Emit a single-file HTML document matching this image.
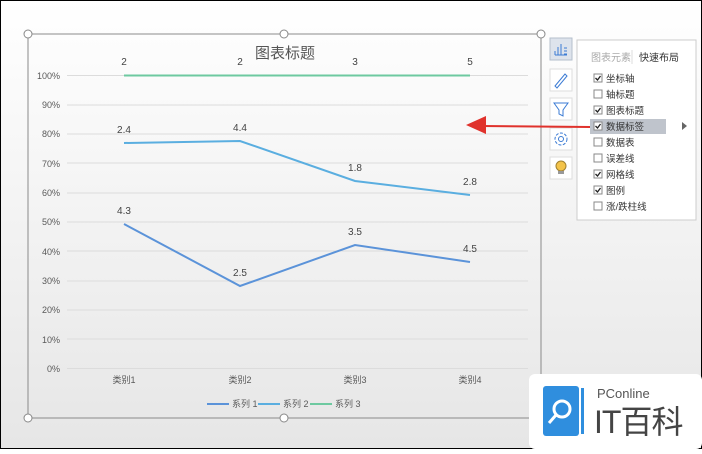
<!DOCTYPE html>
<html><head><meta charset="utf-8"><style>
body{margin:0;width:702px;height:449px;overflow:hidden;font-family:"Liberation Sans","Noto Sans CJK SC",sans-serif;}
</style></head><body>
<svg width="702" height="449" xmlns="http://www.w3.org/2000/svg" font-family="Liberation Sans, Noto Sans CJK SC, sans-serif">
<defs><linearGradient id="bg" x1="0" y1="0" x2="0" y2="1"><stop offset="0" stop-color="#ffffff"/><stop offset="1" stop-color="#e6e6e6"/></linearGradient></defs>
<rect x="0" y="0" width="702" height="449" fill="url(#bg)"/>
<rect x="0.5" y="0.5" width="701" height="448" fill="none" stroke="#000"/>
<rect x="28" y="34" width="513" height="384" fill="none" stroke="#8a8a8a"/>
<g fill="#fff" stroke="#888">
<circle cx="28" cy="34" r="4"/><circle cx="284" cy="34" r="4"/><circle cx="541" cy="34" r="4"/>
<circle cx="28" cy="418" r="4"/><circle cx="284" cy="418" r="4"/></g>
<text x="285" y="58" font-size="15" fill="#555" text-anchor="middle">图表标题</text>
<g stroke="#dcdcdc" stroke-width="1">
<line x1="67" y1="75.5" x2="528" y2="75.5"/><line x1="67" y1="105" x2="528" y2="105"/><line x1="67" y1="134" x2="528" y2="134"/><line x1="67" y1="163" x2="528" y2="163"/><line x1="67" y1="193" x2="528" y2="193"/><line x1="67" y1="222" x2="528" y2="222"/><line x1="67" y1="251" x2="528" y2="251"/><line x1="67" y1="281" x2="528" y2="281"/><line x1="67" y1="310" x2="528" y2="310"/><line x1="67" y1="339" x2="528" y2="339"/><line x1="67" y1="368.5" x2="528" y2="368.5"/></g>
<g font-size="9" fill="#595959" text-anchor="end">
<text x="60" y="79">100%</text><text x="60" y="108">90%</text><text x="60" y="137">80%</text><text x="60" y="167">70%</text><text x="60" y="196">60%</text><text x="60" y="225">50%</text><text x="60" y="255">40%</text><text x="60" y="284">30%</text><text x="60" y="313">20%</text><text x="60" y="343">10%</text><text x="60" y="372">0%</text></g>
<g font-size="9" fill="#595959" text-anchor="middle">
<text x="124" y="383">类别1</text><text x="240" y="383">类别2</text><text x="355" y="383">类别3</text><text x="470" y="383">类别4</text></g>
<polyline points="124,75.5 470,75.5" stroke="#6dc9a0" stroke-width="2" fill="none"/>
<polyline points="124,143 240,141 355,181 470,195" stroke="#5aaee0" stroke-width="2" fill="none"/>
<polyline points="124,224 240,286 355,245 470,262" stroke="#5b93d9" stroke-width="2" fill="none"/>
<g font-size="10" fill="#444" text-anchor="middle">
<text x="124" y="65">2</text><text x="240" y="65">2</text><text x="355" y="65">3</text><text x="470" y="65">5</text>
<text x="124" y="133">2.4</text><text x="240" y="131">4.4</text><text x="355" y="171">1.8</text><text x="470" y="185">2.8</text>
<text x="124" y="214">4.3</text><text x="240" y="276">2.5</text><text x="355" y="235">3.5</text><text x="470" y="252">4.5</text></g>
<g font-size="9" fill="#595959">
<line x1="207" y1="404" x2="229" y2="404" stroke="#5b93d9" stroke-width="2"/><text x="232" y="407">系列 1</text>
<line x1="258" y1="404" x2="280" y2="404" stroke="#5aaee0" stroke-width="2"/><text x="283" y="407">系列 2</text>
<line x1="310" y1="404" x2="332" y2="404" stroke="#6dc9a0" stroke-width="2"/><text x="335" y="407">系列 3</text></g>
<!-- side buttons -->
<rect x="550" y="38" width="22" height="22" fill="#dde3ec" stroke="#b5bfcc"/>
<g stroke="#3b7bd4" fill="none"><path d="M555 55v-4M558 55v-8M561 55v-11M555 55h12M564 48h3M564 51h3M564 54h3"/></g>
<rect x="550" y="69" width="22" height="22" fill="#fff" stroke="#ddd"/>
<path d="M555 86l10-12 2 2-10 12z" fill="none" stroke="#3b7bd4"/>
<rect x="550" y="98" width="22" height="22" fill="#fff" stroke="#ddd"/>
<path d="M554 103h14l-5 7v6l-4-2v-4z" fill="none" stroke="#3b7bd4"/>
<rect x="550" y="128" width="22" height="22" fill="#fff" stroke="#ddd"/>
<circle cx="561" cy="139" r="6" fill="none" stroke="#3b7bd4" stroke-dasharray="3 1.5"/><circle cx="561" cy="139" r="2.5" fill="none" stroke="#3b7bd4"/>
<rect x="550" y="157" width="22" height="22" fill="#fff" stroke="#ddd"/>
<circle cx="561" cy="166" r="5" fill="#f3c34a" stroke="#a08030"/><rect x="558" y="171" width="6" height="3" fill="#999"/>
<!-- panel -->
<rect x="577" y="40" width="119" height="180" fill="#fff" stroke="#ccc"/>
<text x="591" y="61" font-size="10" fill="#aaa">图表元素</text>
<line x1="632" y1="50" x2="632" y2="64" stroke="#ddd"/>
<text x="639" y="61" font-size="10" fill="#333">快速布局</text>
<rect x="590" y="119" width="76" height="15" fill="#bfc4cc"/>
<path d="M682 122l5 4-5 4z" fill="#666"/>
<g font-size="9.5" fill="#333">
<g fill="#fff" stroke="#888"><rect x="594" y="74" width="8" height="8"/><rect x="594" y="90" width="8" height="8"/><rect x="594" y="106" width="8" height="8"/><rect x="594" y="122" width="8" height="8"/><rect x="594" y="138" width="8" height="8"/><rect x="594" y="154" width="8" height="8"/><rect x="594" y="170" width="8" height="8"/><rect x="594" y="186" width="8" height="8"/><rect x="594" y="202" width="8" height="8"/></g>
<g stroke="#222" stroke-width="1.3" fill="none"><path d="M595.5 78l2 2 3-4"/><path d="M595.5 110l2 2 3-4"/><path d="M595.5 126l2 2 3-4"/><path d="M595.5 174l2 2 3-4"/><path d="M595.5 190l2 2 3-4"/></g>
<text x="606" y="82">坐标轴</text><text x="606" y="98">轴标题</text><text x="606" y="114">图表标题</text><text x="606" y="130">数据标签</text><text x="606" y="146">数据表</text><text x="606" y="162">误差线</text><text x="606" y="178">网格线</text><text x="606" y="194">图例</text><text x="606" y="210">涨/跌柱线</text></g>
<!-- red arrow -->
<line x1="482" y1="126" x2="590" y2="127" stroke="#e0322c" stroke-width="2"/>
<path d="M466 125l20-9v18z" fill="#e0322c"/>
<!-- logo -->
<rect x="529" y="374" width="173" height="75" rx="6" fill="#fff"/>
<rect x="543" y="386" width="36" height="50" rx="3" fill="#2f8ede"/>
<rect x="581" y="388" width="3" height="46" fill="#2f8ede"/>
<circle cx="562" cy="409" r="8" fill="none" stroke="#fff" stroke-width="3"/>
<path d="M556 415l-7 8" stroke="#fff" stroke-width="3"/>
<text x="597" y="398" font-size="13" fill="#555">PConline</text>
<text x="594" y="433" font-size="32" fill="#444" letter-spacing="-1">IT百科</text>
</svg>
</body></html>
